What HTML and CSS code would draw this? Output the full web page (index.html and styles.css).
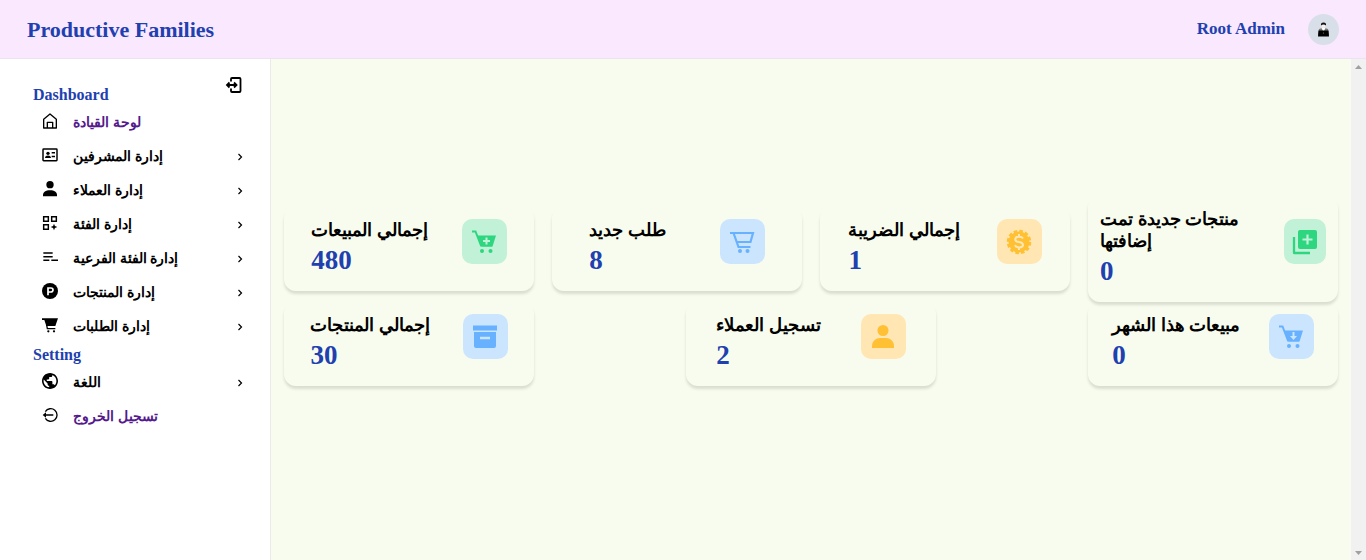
FILE: index.html
```html
<!DOCTYPE html>
<html lang="ar">
<head>
<meta charset="utf-8">
<meta name="viewport" content="width=device-width, initial-scale=1">
<title>Productive Families</title>
<link rel="stylesheet" href="styles.css">
</head>
<body>
<header class="topbar">
  <h1 class="brand">Productive Families</h1>
  <div class="account">
    <span class="account-name">Root Admin</span>
    <svg class="avatar" viewBox="0 0 31 31" aria-hidden="true"><circle cx="15.500" cy="15.500" r="15.500" fill="#d9dfe9"/><path d="M11 15q4.500-2 9 0l1 6H10z" fill="#777"/><path d="M13.500 14h4l-2 4z" fill="#fff"/><ellipse cx="15.500" cy="11.700" rx="2" ry="2.400" fill="#f7efec"/><path d="M13 11.500q-.5-3 2.500-3t2.500 3q-2.500-2-5 0z" fill="#111"/><path d="M10.500 16.500h10l.5 6H10z" fill="#000"/><circle cx="15.500" cy="19" r=".6" fill="#777"/></svg>
  </div>
</header>
<div class="shell">
  <nav class="sidebar" aria-label="Main">
    <div class="section-head">
      <h2 class="section-title">Dashboard</h2>
      <button class="collapse" type="button" aria-label="Collapse menu"><svg class="collapse-icon" viewBox="0 0 18 18"><path d="M6 5.500V3q0-1 1-1h7.500q1 0 1 1v12q0 1-1 1H7q-1 0-1-1v-2.500M1.500 9H11M4.500 6.500 2 9l2.500 2.500M9 6.500 11.500 9 9 11.500" fill="none" stroke="#000" stroke-width="1.800"/></svg></button>
    </div>
    <ul class="menu">
      <li><a class="item visited" href="#"><svg class="icon" viewBox="0 0 24 24"><path d="M2.500 22.500v-13L12 1.500l9.500 8v13H16V14H8v8.500zM8 22.500h8" fill="none" stroke="#000" stroke-width="2" stroke-linejoin="round"/></svg><span class="label">لوحة القيادة</span></a></li>
      <li><button class="item" type="button"><svg class="icon" viewBox="0 0 24 24"><rect x="1.500" y="3" width="21" height="17.500" rx="1" fill="none" stroke="#000" stroke-width="2.200"/><circle cx="9" cy="9.500" r="2.500"/><path d="M4.500 16.500c0-5 9-5 9 0zM14.500 7.500h5v2.300h-5zM14.500 13h5v2.300h-5z"/></svg><span class="label">إدارة المشرفين</span><svg class="chevron" viewBox="0 0 10 10"><path d="M3.500 2 6.500 5l-3 3" fill="none" stroke="#000" stroke-width="1.200"/></svg></button></li>
      <li><button class="item" type="button"><svg class="icon" viewBox="0 0 24 24"><circle cx="12" cy="5.500" r="5.500"/><path d="M1.500 23v-2c0-4 4-7 10.500-7s10.500 3 10.500 7v2z"/></svg><span class="label">إدارة العملاء</span><svg class="chevron" viewBox="0 0 10 10"><path d="M3.500 2 6.500 5l-3 3" fill="none" stroke="#000" stroke-width="1.200"/></svg></button></li>
      <li><button class="item" type="button"><svg class="icon" viewBox="0 0 24 24"><path d="M2.500 2.500h7v7h-7zM14.500 2.500h7v7h-7zM2.500 14.500h7v7h-7z" fill="none" stroke="#000" stroke-width="2.200"/><path d="M18 13l1.400 3.600L23 18l-3.600 1.400L18 23l-1.400-3.600L13 18l3.600-1.400z"/></svg><span class="label">إدارة الفئة</span><svg class="chevron" viewBox="0 0 10 10"><path d="M3.500 2 6.500 5l-3 3" fill="none" stroke="#000" stroke-width="1.200"/></svg></button></li>
      <li><button class="item" type="button"><svg class="icon" viewBox="0 0 24 24"><path d="M2 6h14M2 11.500h14M2 17h9M14 17h10" fill="none" stroke="#000" stroke-width="2.300"/></svg><span class="label">إدارة الفئة الفرعية</span><svg class="chevron" viewBox="0 0 10 10"><path d="M3.500 2 6.500 5l-3 3" fill="none" stroke="#000" stroke-width="1.200"/></svg></button></li>
      <li><button class="item" type="button"><svg class="icon" viewBox="0 0 24 24"><circle cx="12" cy="12" r="12"/><path d="M9 18.500v-11h4.500a3 3 0 0 1 0 6H9" fill="none" stroke="#fff" stroke-width="2.600"/></svg><span class="label">إدارة المنتجات</span><svg class="chevron" viewBox="0 0 10 10"><path d="M3.500 2 6.500 5l-3 3" fill="none" stroke="#000" stroke-width="1.200"/></svg></button></li>
      <li><button class="item" type="button"><svg class="icon" viewBox="0 0 24 24"><path d="M0 2h24l-4 11.500H6.500L3.500 4.500H0z"/><path d="M7 12l1 5.500h12" fill="none" stroke="#000" stroke-width="2"/><circle cx="9.500" cy="21.500" r="1.700"/><circle cx="18" cy="21.500" r="1.700"/></svg><span class="label">إدارة الطلبات</span><svg class="chevron" viewBox="0 0 10 10"><path d="M3.500 2 6.500 5l-3 3" fill="none" stroke="#000" stroke-width="1.200"/></svg></button></li>
    </ul>
    <h2 class="section-title">Setting</h2>
    <ul class="menu">
      <li><button class="item" type="button"><svg class="icon" viewBox="1 1 22 22"><path d="M12 1C5.900 1 1 5.900 1 12s4.900 11 11 11 11-4.900 11-11S18.100 1 12 1zm-1.100 19.700C6.600 20.200 3.200 16.500 3.200 12c0-.7.100-1.300.2-2l5.300 5.300v1.100c0 1.200 1 2.200 2.200 2.200v2.100zm7.600-2.800c-.3-.9-1.100-1.500-2.100-1.500h-1.100v-3.300c0-.6-.5-1.100-1.100-1.100H7.600V9.800h2.200c.6 0 1.100-.5 1.100-1.100V6.500h2.200c1.200 0 2.200-1 2.200-2.200v-.5c3.200 1.300 5.500 4.500 5.500 8.200 0 2.300-.9 4.400-2.300 5.900z"/></svg><span class="label">اللغة</span><svg class="chevron" viewBox="0 0 10 10"><path d="M3.500 2 6.500 5l-3 3" fill="none" stroke="#000" stroke-width="1.200"/></svg></button></li>
      <li><a class="item visited" href="#"><svg class="icon" viewBox="0 0 24 24"><path d="M5 7a9.500 9.500 0 1 1 0 10M3 12h14" fill="none" stroke="#000" stroke-width="2"/><path d="M6 8v8l-5-4z"/></svg><span class="label">تسجيل الخروج</span></a></li>
    </ul>
  </nav>
  <main class="content">
    <article class="card"><div><h3 class="card-title">إجمالي المبيعات</h3><p class="value">480</p></div><div class="tile green"><svg class="tile-icon" viewBox="0 0 26 26"><path d="M1 2.500h3.500l5.500 14h11" fill="none" stroke="currentColor" stroke-width="2"/><path d="M6 6.500h19l-3.500 11h-11z" fill="currentColor"/><circle cx="11" cy="22" r="2" fill="currentColor"/><circle cx="19.500" cy="22" r="2" fill="currentColor"/><path d="M15.500 8.500v7M12 12h7" stroke="#c1f1d7" stroke-width="2"/></svg></div></article>
    <article class="card"><div><h3 class="card-title">طلب جديد</h3><p class="value">8</p></div><div class="tile blue"><svg class="tile-icon" viewBox="0 0 26 26"><path d="M1 4h23l-2.500 9H7.500M4.500 4l5 14h12" fill="none" stroke="currentColor" stroke-width="2.200"/><circle cx="11" cy="22" r="2" fill="currentColor"/><circle cx="18.500" cy="22" r="2" fill="currentColor"/></svg></div></article>
    <article class="card"><div><h3 class="card-title">إجمالي الضريبة</h3><p class="value">1</p></div><div class="tile amber"><svg class="tile-icon" viewBox="0 0 26 26"><circle cx="13" cy="13" r="10.500" fill="currentColor"/><circle cx="13" cy="13" r="10.500" fill="none" stroke="currentColor" stroke-width="3.500" stroke-dasharray="3.400 2.100"/><path d="M17 9.500Q16 7.700 13 7.700q-3.700 0-3.700 2.600T13 13q4 .5 4 2.900t-4 2.500q-3.200 0-4-2.200M13 5v3M13 18v3" fill="none" stroke="#ffe6b3" stroke-width="2"/></svg></div></article>
    <article class="card"><div><h3 class="card-title">منتجات جديدة تمت إضافتها</h3><p class="value">0</p></div><div class="tile green"><svg class="tile-icon" viewBox="0 0 26 26"><path d="M2 8v16h16" fill="none" stroke="currentColor" stroke-width="2.300" stroke-linejoin="round"/><rect x="6" y="1" width="19" height="19" rx="2" fill="currentColor"/><path d="M15.500 5.500v10M10.500 10.500h10" stroke="#c1f1d7" stroke-width="2.200"/></svg></div></article>
    <article class="card"><div><h3 class="card-title">إجمالي المنتجات</h3><p class="value">30</p></div><div class="tile blue"><svg class="tile-icon" viewBox="0 0 26 26"><path d="M1 1.500h24v5H1zM2 8h22v14q0 2-2 2H4q-2 0-2-2z" fill="currentColor"/><path d="M8 14h10" stroke="#cbe5ff" stroke-width="2.500"/></svg></div></article>
    <article class="card"><div><h3 class="card-title">تسجيل العملاء</h3><p class="value">2</p></div><div class="tile amber"><svg class="tile-icon" viewBox="0 0 26 26"><circle cx="13" cy="6.500" r="5.500" fill="currentColor"/><path d="M2 24v-1.500C2 17 6 14 10 14h6c4 0 8 3 8 8.500V24z" fill="currentColor"/></svg></div></article>
    <article class="card"><div><h3 class="card-title">مبيعات هذا الشهر</h3><p class="value">0</p></div><div class="tile blue"><svg class="tile-icon" viewBox="0 0 26 26"><path d="M1 2.500h3.500l5.500 14h11" fill="none" stroke="currentColor" stroke-width="2"/><path d="M6 6.500h19l-3.500 11h-11z" fill="currentColor"/><circle cx="11" cy="22" r="2" fill="currentColor"/><circle cx="19.500" cy="22" r="2" fill="currentColor"/><path d="M15.500 8v6" stroke="#cbe5ff" stroke-width="2"/><path d="M12 12h7l-3.500 4z" fill="#cbe5ff"/></svg></div></article>
  </main>
  <div class="scroll-track" aria-hidden="true">
    <svg class="scroll-arrow" viewBox="0 0 15 15"><path d="M4 10l3.500-4 3.500 4z" fill="#a0a0a0"/></svg>
    <svg class="scroll-arrow" viewBox="0 0 15 15"><path d="M4 6l3.500 4L11 6z" fill="#a0a0a0"/></svg>
  </div>
</div>
</body>
</html>
```
FILE: styles.css
```css
* { box-sizing: border-box; }
body {
  display: flex;
  flex-direction: column;
  height: 100vh;
  margin: 0;
  font-family: "Liberation Serif", serif;
  background: #fff;
}
h1, h2, h3, p, ul { margin: 0; padding: 0; }
ul { list-style: none; }
.topbar {
  display: flex;
  align-items: center;
  justify-content: space-between;
  padding: 14px 27px 13px;
  color: #2140b0;
  background: #fae8ff;
  border-bottom: 1px solid #ece4ec;
}
.brand { font-size: 22px; line-height: 28px; }
.account { display: flex; align-items: center; gap: 23px; }
.account-name { font-size: 17px; font-weight: 700; line-height: 22px; padding-bottom: 2px; }
.avatar { width: 31px; height: 31px; }
.shell { display: flex; flex: 1; min-height: 0; }
.sidebar {
  flex: none;
  width: 271px;
  padding: 17px 25px 0 33px;
  border-right: 1px solid #ece9ec;
}
.section-head { display: flex; align-items: flex-end; justify-content: space-between; }
.section-title { color: #2140b0; font-size: 16px; line-height: 20px; }
.collapse {
  height: 29px;
  padding: 0 2px 11px 0;
  border: 0;
  background: none;
}
.collapse-icon { display: block; width: 18px; height: 18px; }
.menu { display: flex; flex-direction: column; padding-bottom: 2px; }
.item {
  display: flex;
  align-items: flex-start;
  width: 100%;
  height: 34px;
  padding: 8px 0 0 9px;
  border: 0;
  background: none;
  color: #000;
  font: 700 14px/20px "Liberation Serif", serif;
  text-align: left;
  text-decoration: none;
}
.visited { color: #551a8b; }
.icon { flex: none; width: 16px; height: 16px; margin-right: 15px; }
.label { flex: 1; }
.chevron { width: 10px; height: 10px; margin-top: 5px; }
.content {
  display: flex;
  flex: 1;
  flex-wrap: wrap;
  align-items: center;
  align-content: center;
  justify-content: space-between;
  min-width: 0;
  padding: 0 13px 37px;
  background: #f8fcee;
  overflow-y: auto;
}
.scroll-track {
  display: flex;
  flex: none;
  flex-direction: column;
  justify-content: space-between;
  width: 15px;
  background: #f1f1f1;
}
.scroll-arrow { width: 15px; height: 15px; }
.card {
  display: flex;
  align-items: center;
  justify-content: space-around;
  gap: 4px;
  width: 250px;
  padding: 12px;
  border-radius: 12px;
  box-shadow: 0 3px 3px rgba(0, 0, 0, .12);
}
.card-title { font-size: 18px; line-height: 22px; }
.value { padding: 4px 0 3px; color: #2140b0; font-size: 27px; font-weight: 700; line-height: 31px; }
.tile {
  display: flex;
  align-items: center;
  justify-content: center;
  width: 45px;
  height: 45px;
  margin-bottom: 15px;
  border-radius: 10px;
}
.tile-icon { flex: none; width: 26px; height: 26px; }
.green { color: #2dd67f; background: #c1f1d7; }
.blue { color: #67b1ff; background: #cbe5ff; }
.amber { color: #ffc033; background: #ffe6b3; }
```
